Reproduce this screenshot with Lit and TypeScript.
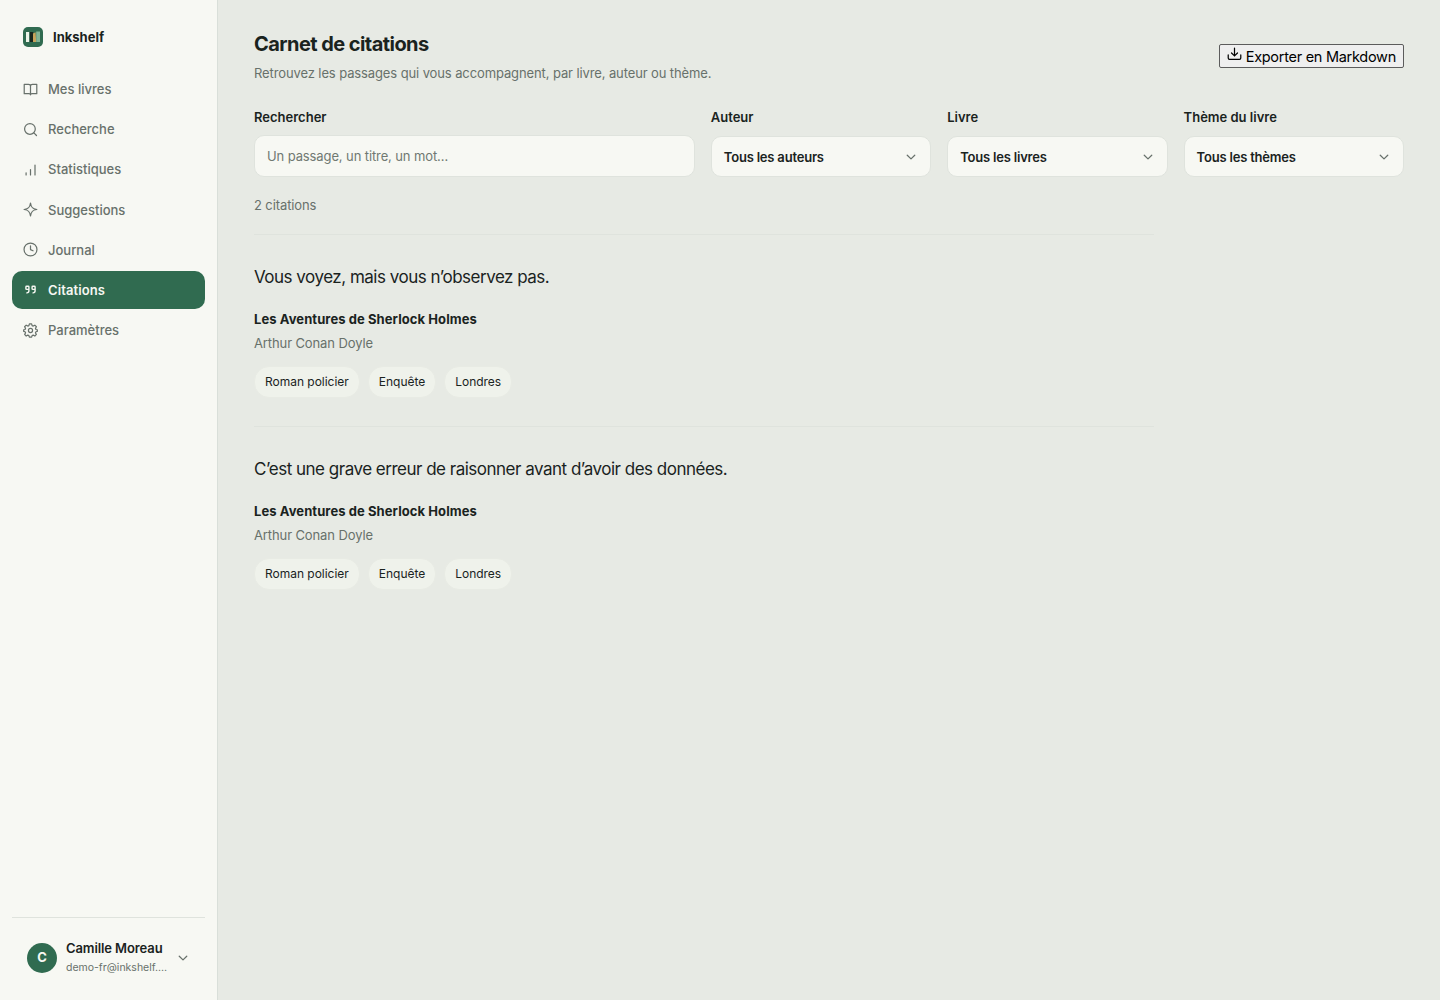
import { LitElement, html, css, svg } from 'lit';
import { customElement, property } from 'lit/decorators.js';

const icons: Record<string, unknown> = {
  book: svg`<path d="M8 3.700v10M1.300 2.600h4.500c1.200 0 2.200.7 2.200 1.700v9.400c0-.8-.7-1.300-1.600-1.300H1.300zM14.700 2.600h-4.500C9 2.600 8 3.300 8 4.300v9.400c0-.8.7-1.300 1.600-1.300h5.100z"/>`,
  search: svg`<circle cx="7.400" cy="7.400" r="5.700"/><path d="m11.600 11.600 2.800 2.800"/>`,
  stats: svg`<path d="M3.300 11.500v2.300M8 8v5.800M12.800 3.200v10.600"/>`,
  sparkle: svg`<path d="M8 1.200c.6 4.600 2.200 6.200 6.800 6.800-4.600.6-6.200 2.200-6.800 6.800C7.400 10.200 5.800 8.600 1.200 8 5.800 7.400 7.400 5.800 8 1.200z"/>`,
  clock: svg`<circle cx="8" cy="8" r="6.900"/><path d="M8 4v4.100l2.700 1.300"/>`,
  quote: svg`<path d="M6.300 6.800H3.900c-.5 0-.8-.3-.8-.8V4.200c0-.5.300-.8.800-.8h1.600c.5 0 .8.300.8.800v4c0 1.500-.7 2.200-2.200 2.300M12.900 6.800h-2.400c-.5 0-.8-.3-.8-.8V4.200c0-.5.300-.8.800-.8h1.600c.5 0 .8.300.8.800v4c0 1.500-.7 2.200-2.200 2.300"/>`,
  gear: svg`<circle cx="8" cy="8" r="2.200"/><path d="M6.800.9h2.400l.5 1.900 1.200.5 1.700-1 1.700 1.700-1 1.700.5 1.200 1.500.4v1.600l-1.500.4-.5 1.200 1 1.700-1.700 1.700-1.700-1-1.200.5-.5 1.700H6.800l-.5-1.700-1.200-.5-1.700 1-1.700-1.700 1-1.700-.5-1.200-1.500-.4V7.300l1.500-.4.5-1.200-1-1.700 1.700-1.700 1.700 1 1.200-.5z"/>`,
  chevron: svg`<path d="m3 5.600 5 4.900 5-4.900"/>`,
  download: svg`<path d="M8 1.200v8.300M4.800 6.400 8 9.500l3.200-3.100M1.300 8.500v3.300c0 .9.600 1.400 1.400 1.400h10.600c.8 0 1.400-.5 1.400-1.400V8.500"/>`
};

@customElement('ink-icon')
export class InkIcon extends LitElement {
  static styles = css`
    :host {
      display: inline-block;
      width: 15px;
      height: 15px;
    }

    svg {
      display: block;
      width: 100%;
      height: 100%;
      fill: none;
      stroke: currentColor;
      stroke-width: var(--icon-stroke, 1.3);
      stroke-linecap: round;
      stroke-linejoin: round;
    }
  `;

  @property({ type: String })
  name = '';

  render() {
    return html`<svg viewBox="0 0 16 16" aria-hidden="true">${icons[this.name]}</svg>`;
  }
}

interface Quote {
  text: string;
  book: string;
  author: string;
  themes: string[];
}

@customElement('app-root')
export class AppRoot extends LitElement {
  static styles = css`
    :host {
      display: flex;
      height: 100vh;
      background: #e7eae4;
      color: #1a231e;
      font-family: Inter, sans-serif;
      font-size: 13px;
      line-height: 1.4;
    }

    * {
      box-sizing: border-box;
    }

    h1,
    p {
      margin: 0;
    }

    .sidebar {
      display: flex;
      flex-direction: column;
      flex: none;
      width: 218px;
      padding: 27px 12px 16px;
      background: #f7f8f3;
      border-right: 1px solid #d9dfd9;
    }

    .brand {
      display: flex;
      align-items: center;
      gap: 10px;
      height: 20px;
      padding-left: 11px;
      margin-bottom: 23px;
      font-weight: 700;
    }

    .logo {
      width: 20px;
      height: 20px;
    }

    .nav {
      display: flex;
      flex-direction: column;
      gap: 2px;
      flex: 1;
    }

    .nav-item {
      display: flex;
      align-items: center;
      gap: 10px;
      padding: 10px 11px;
      border-radius: 10px;
      color: #68716b;
      font-weight: 500;
      text-decoration: none;
    }

    .nav-item.active {
      background: #306b50;
      color: #f7f8f3;
      font-weight: 600;
      letter-spacing: 0.1px;
      --icon-stroke: 1.5;
    }

    .account {
      display: flex;
      align-items: center;
      border-top: 1px solid #dfe3dd;
      padding: 21px 15px 8px;
      gap: 9px;
    }

    .avatar {
      display: grid;
      place-items: center;
      flex: none;
      width: 30px;
      height: 30px;
      border-radius: 50%;
      background: #306b50;
      color: #f7f8f3;
      font-weight: 700;
    }

    .identity {
      width: 102px;
    }

    .name {
      font-weight: 600;
      letter-spacing: -0.1px;
      white-space: nowrap;
    }

    .email {
      overflow: hidden;
      margin-top: 4px;
      color: #68716b;
      font-size: 10.5px;
      text-overflow: ellipsis;
      white-space: nowrap;
    }

    .chevron {
      flex: none;
      width: 12px;
      height: 12px;
      color: #68716b;
      --icon-stroke: 1.7;
    }

    .main {
      flex: 1;
      min-width: 0;
      padding: 30px 36px;
    }

    .header {
      display: flex;
      align-items: center;
      justify-content: space-between;
      margin-bottom: 26px;
    }

    .title {
      font-size: 20px;
      font-weight: 700;
      letter-spacing: -0.56px;
    }

    .muted {
      color: #68716b;
      letter-spacing: -0.11px;
    }

    .subtitle {
      margin-top: 6px;
    }

    .export {
      height: 24px;
      padding: 2px 7px 0;
      margin-bottom: 1px;
      border: 1px solid #5c5c5c;
      border-radius: 2px;
      background: #efefef;
      color: #000;
      font: 14.5px/20px Inter, sans-serif;
      letter-spacing: -0.28px;
      white-space: nowrap;
    }

    .filters {
      display: grid;
      grid-template-columns: 2fr 1fr 1fr 1fr;
      align-items: end;
      gap: 16px;
      margin-bottom: 19px;
    }

    .label {
      display: block;
      margin-bottom: 10px;
      font-weight: 600;
    }

    .search .label {
      margin-bottom: 9px;
    }

    .input,
    .select {
      display: block;
      width: 100%;
      border: 1px solid #dfe3dd;
      border-radius: 10px;
      background: #f7f8f3;
      font: inherit;
    }

    .input {
      height: 42px;
      padding: 0 12px;
      letter-spacing: -0.11px;
    }

    .input::placeholder {
      color: #707972;
      opacity: 1;
    }

    .select {
      display: flex;
      align-items: center;
      justify-content: space-between;
      height: 41px;
      padding: 0 13px 0 12px;
      color: #1a231e;
      font-weight: 600;
      letter-spacing: -0.2px;
    }

    .quotes {
      max-width: 900px;
      margin-top: 19px;
    }

    .quote {
      height: 192.5px;
      padding-top: 30px;
      border-top: 1px solid #dfe3dd;
    }

    .quote-text {
      margin-bottom: 21px;
      font-size: 17px;
      line-height: 24px;
      letter-spacing: -0.5px;
    }

    .book {
      margin-bottom: 6px;
      font-weight: 700;
      letter-spacing: 0.08px;
    }

    .themes {
      display: flex;
      gap: 8px;
      margin-top: 14px;
    }

    .theme {
      padding: 6px 10px;
      border: 1px solid #e8ebe4;
      border-radius: 15px;
      background: #eff2eb;
      font-size: 12px;
      line-height: 18px;
      letter-spacing: -0.02px;
    }
  `;

  @property({ type: Array })
  nav = [
    { icon: 'book', label: 'Mes livres' },
    { icon: 'search', label: 'Recherche' },
    { icon: 'stats', label: 'Statistiques' },
    { icon: 'sparkle', label: 'Suggestions' },
    { icon: 'clock', label: 'Journal' },
    { icon: 'quote', label: 'Citations', active: true },
    { icon: 'gear', label: 'Paramètres' }
  ];

  @property({ type: Array })
  filters = [
    { label: 'Auteur', value: 'Tous les auteurs' },
    { label: 'Livre', value: 'Tous les livres' },
    { label: 'Thème du livre', value: 'Tous les thèmes' }
  ];

  @property({ type: Array })
  quotes: Quote[] = [
    {
      text: 'Vous voyez, mais vous n’observez pas.',
      book: 'Les Aventures de Sherlock Holmes',
      author: 'Arthur Conan Doyle',
      themes: ['Roman policier', 'Enquête', 'Londres']
    },
    {
      text: 'C’est une grave erreur de raisonner avant d’avoir des données.',
      book: 'Les Aventures de Sherlock Holmes',
      author: 'Arthur Conan Doyle',
      themes: ['Roman policier', 'Enquête', 'Londres']
    }
  ];

  render() {
    return html`
      <aside class="sidebar">
        <div class="brand">
          <svg class="logo" viewBox="0 0 20 20" aria-hidden="true">
            <rect width="20" height="20" rx="5" fill="#306b50" />
            <rect x="3" y="5" width="3.200" height="10" fill="#edf5e9" />
            <rect x="6.800" y="5" width="3.400" height="10" fill="#17251e" />
            <path d="M10 6.500 12.600 5.200 13.200 15H10z" fill="#c7a35b" />
            <rect x="13.200" y="4.500" width="3.800" height="10.500" fill="#82b394" />
          </svg>
          <span>Inkshelf</span>
        </div>
        <nav class="nav">
          ${this.nav.map(
            (item) => html`
              <a class="nav-item ${item.active ? 'active' : ''}">
                <ink-icon name=${item.icon}></ink-icon>
                <span>${item.label}</span>
              </a>
            `
          )}
        </nav>
        <div class="account">
          <div class="avatar">C</div>
          <div class="identity">
            <div class="name">Camille Moreau</div>
            <div class="email">demo-fr@inkshelf.…</div>
          </div>
          <ink-icon class="chevron" name="chevron"></ink-icon>
        </div>
      </aside>
      <main class="main">
        <header class="header">
          <div>
            <h1 class="title">Carnet de citations</h1>
            <p class="subtitle muted">Retrouvez les passages qui vous accompagnent, par livre, auteur ou thème.</p>
          </div>
          <button class="export"><ink-icon name="download"></ink-icon> Exporter en Markdown</button>
        </header>
        <div class="filters">
          <label class="search">
            <span class="label">Rechercher</span>
            <input class="input" placeholder="Un passage, un titre, un mot…" />
          </label>
          ${this.filters.map(
            (filter) => html`
              <div>
                <span class="label">${filter.label}</span>
                <button class="select">
                  ${filter.value}
                  <ink-icon class="chevron" name="chevron"></ink-icon>
                </button>
              </div>
            `
          )}
        </div>
        <p class="muted">${this.quotes.length} citations</p>
        <section class="quotes">${this.quotes.map((quote) => this._renderQuote(quote))}</section>
      </main>
    `;
  }

  private _renderQuote(quote: Quote) {
    return html`
      <article class="quote">
        <p class="quote-text">${quote.text}</p>
        <p class="book">${quote.book}</p>
        <p class="muted">${quote.author}</p>
        <div class="themes">
          ${quote.themes.map((theme) => html`<span class="theme">${theme}</span>`)}
        </div>
      </article>
    `;
  }
}
